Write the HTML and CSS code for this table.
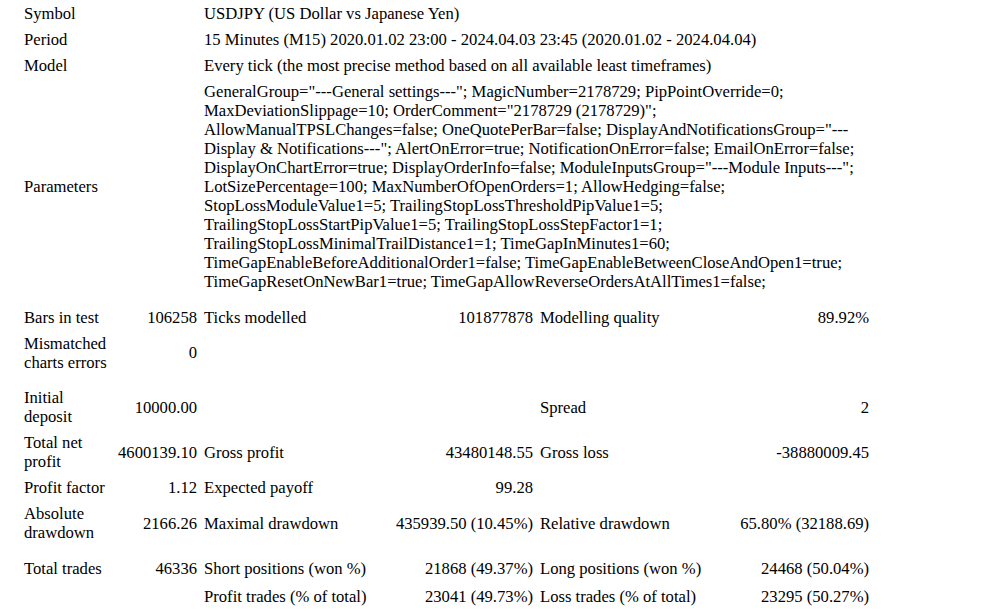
FILE: index.html
```html
<!DOCTYPE html>
<html>
<head>
<meta charset="utf-8">
<link rel="stylesheet" href="styles.css">
</head>
<body>
<table class="report">
  <colgroup>
    <col class="c1"><col class="c2"><col class="c3"><col class="c4"><col class="c5"><col class="c6">
  </colgroup>
  <tr><td colspan="2">Symbol</td><td colspan="4">USDJPY (US Dollar vs Japanese Yen)</td></tr>
  <tr><td colspan="2">Period</td><td colspan="4">15 Minutes (M15) 2020.01.02 23:00 - 2024.04.03 23:45 (2020.01.02 - 2024.04.04)</td></tr>
  <tr><td colspan="2">Model</td><td colspan="4">Every tick (the most precise method based on all available least timeframes)</td></tr>
  <tr><td colspan="2">Parameters</td><td colspan="4">GeneralGroup="---General settings---"; MagicNumber=2178729; PipPointOverride=0; MaxDeviationSlippage=10; OrderComment="2178729 (2178729)"; AllowManualTPSLChanges=false; OneQuotePerBar=false; DisplayAndNotificationsGroup="---Display &amp; Notifications---"; AlertOnError=true; NotificationOnError=false; EmailOnError=false; DisplayOnChartError=true; DisplayOrderInfo=false; ModuleInputsGroup="---Module Inputs---"; LotSizePercentage=100; MaxNumberOfOpenOrders=1; AllowHedging=false; StopLossModuleValue1=5; TrailingStopLossThresholdPipValue1=5; TrailingStopLossStartPipValue1=5; TrailingStopLossStepFactor1=1; TrailingStopLossMinimalTrailDistance1=1; TimeGapInMinutes1=60; TimeGapEnableBeforeAdditionalOrder1=false; TimeGapEnableBetweenCloseAndOpen1=true; TimeGapResetOnNewBar1=true; TimeGapAllowReverseOrdersAtAllTimes1=false;</td></tr>
  <tr class="spacer"><td colspan="6"></td></tr>
  <tr><td>Bars in test</td><td class="num">106258</td><td>Ticks modelled</td><td class="num">101877878</td><td>Modelling quality</td><td class="num">89.92%</td></tr>
  <tr><td>Mismatched charts errors</td><td class="num">0</td><td></td><td></td><td></td><td></td></tr>
  <tr class="spacer"><td colspan="6"></td></tr>
  <tr><td>Initial deposit</td><td class="num">10000.00</td><td></td><td></td><td>Spread</td><td class="num">2</td></tr>
  <tr><td>Total net profit</td><td class="num">4600139.10</td><td>Gross profit</td><td class="num">43480148.55</td><td>Gross loss</td><td class="num">-38880009.45</td></tr>
  <tr><td>Profit factor</td><td class="num">1.12</td><td>Expected payoff</td><td class="num">99.28</td><td></td><td></td></tr>
  <tr><td>Absolute drawdown</td><td class="num">2166.26</td><td>Maximal drawdown</td><td class="num">435939.50 (10.45%)</td><td>Relative drawdown</td><td class="num">65.80% (32188.69)</td></tr>
  <tr class="spacer"><td colspan="6"></td></tr>
  <tr><td>Total trades</td><td class="num">46336</td><td>Short positions (won %)</td><td class="num">21868 (49.37%)</td><td>Long positions (won %)</td><td class="num">24468 (50.04%)</td></tr>
  <tr class="last"><td></td><td></td><td>Profit trades (% of total)</td><td class="num">23041 (49.73%)</td><td>Loss trades (% of total)</td><td class="num">23295 (50.27%)</td></tr>
</table>
</body>
</html>
```

FILE: styles.css
```css
html, body {
  margin: 0;
  padding: 0;
  background: #ffffff;
}

body {
  color: #000000;
  font-family: "Liberation Serif", "Times New Roman", serif;
  font-size: 16.64px;
  line-height: 19px;
}

.report {
  margin-left: 20px;
  table-layout: fixed;
  width: 853px;
  border-collapse: separate;
  border-spacing: 1px;
}

.c1 { width: 91px; }
.c2 { width: 87px; }
.c3 { width: 174px; }
.c4 { width: 160px; }
.c5 { width: 183px; }
.c6 { width: 151px; }

.report td {
  padding: 3px;
  text-align: left;
  vertical-align: middle;
}

.report td.num {
  text-align: right;
}

.report tr.spacer td {
  height: 8.6px;
  padding: 0;
}

.report tr.last td {
  padding-top: 5px;
}
```
